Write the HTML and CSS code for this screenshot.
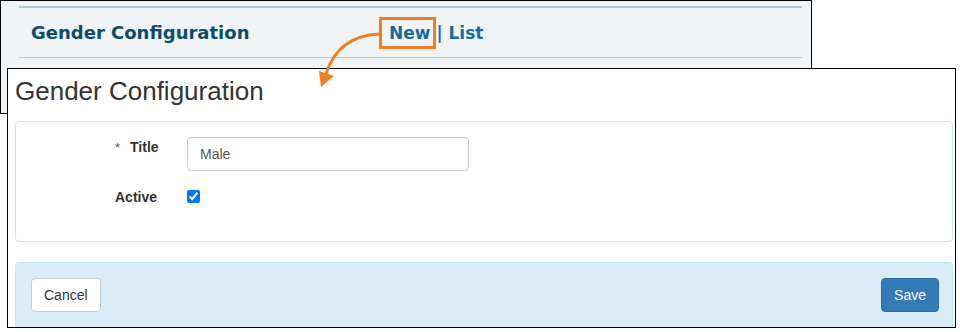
FILE: index.html
```html
<!DOCTYPE html>
<html lang="en">
<head>
    <meta charset="UTF-8">
    <meta name="viewport" content="width=device-width, initial-scale=1.0">
    <title>Gender Configuration</title>
    <link rel="stylesheet" href="styles.css">
</head>
<body>
    <div class="shot shot-list">
        <div class="list-head">
            <h2 class="list-title">Gender Configuration</h2>
            <nav class="list-links">
                <a class="link link-new" href="#">New</a> | <a class="link" href="#">List</a>
            </nav>
        </div>
    </div>

    <div class="shot shot-form">
        <h1 class="form-title">Gender Configuration</h1>

        <div class="form-body">
            <div class="form-row">
                <label class="form-label" for="title"><span class="required">*</span>Title</label>
                <input type="text" class="form-input" id="title" value="Male">
            </div>
            <div class="form-row">
                <label class="form-label" for="active">Active</label>
                <input type="checkbox" class="form-check" id="active" checked>
            </div>
        </div>

        <div class="form-footer">
            <button class="btn">Cancel</button>
            <button class="btn btn-primary">Save</button>
        </div>
    </div>

    <!-- annotation arrow from the New link down to the form -->
    <svg class="callout" width="960" height="332" viewBox="0 0 960 332">
        <path d="M379 34 Q338 36 326 74" fill="none" stroke="#f07f22" stroke-width="3"/>
        <polygon points="319,71 334,76 321,87" fill="#f07f22"/>
    </svg>
</body>
</html>
```

FILE: styles.css
```css
body {
    margin: 0;
    padding: 0;
    background: #fff;
    font-family: "Liberation Sans", Arial, sans-serif;
    color: #333;
    position: relative;
    width: 960px;
    height: 332px;
    overflow: hidden;
}

.shot {
    box-sizing: border-box;
    border: 1px solid #000;
}

/* list page screenshot */
.shot-list {
    width: 812px;
    height: 114px;
    background: #f0f4f7;
    padding: 5px 9px 0 18px;
}

.list-head {
    display: flex;
    align-items: center;
    height: 52px;
    box-sizing: border-box;
    border-top: 2px solid #b5c7d3;
    border-bottom: 1px solid #b9c8d3;
    padding-left: 12px;
}

.list-title {
    width: 358px;
    margin: 0;
    font-family: "DejaVu Sans", Verdana, sans-serif;
    font-size: 18px;
    font-weight: bold;
    color: #0f4b6d;
}

.list-links {
    font-family: "DejaVu Sans", Verdana, sans-serif;
    font-size: 17px;
    font-weight: bold;
    color: #1a6aa0;
}

.link {
    color: #1a6aa0;
    text-decoration: none;
}

.link-new {
    position: relative;
}

.link-new::after {
    content: "";
    position: absolute;
    left: -10px;
    right: -6px;
    top: -6px;
    bottom: -6px;
    border: 3px solid #f07f22;
}

/* new form screenshot */
.shot-form {
    position: relative;
    width: 949px;
    height: 260px;
    margin: -46px 0 0 7px;
    background: #fff;
    padding: 0 2px 0 7px;
    overflow: hidden;
}

.form-title {
    margin: 8px 0 0;
    font-size: 26px;
    line-height: 28px;
    font-weight: normal;
    color: #333;
}

.form-body {
    margin-top: 16px;
    height: 121px;
    box-sizing: border-box;
    border: 1px solid #bce8f1;
    border-radius: 4px;
    padding: 15px 0 0 99px;
    display: flex;
    flex-direction: column;
    gap: 16px;
}

.form-row {
    display: flex;
    align-items: flex-start;
}

.form-label {
    width: 72px;
    font-size: 14px;
    line-height: 20px;
    font-weight: bold;
    color: #333;
}

.required {
    font-weight: normal;
    font-size: 13px;
    color: #8a3b3b;
    margin-right: 10px;
}

.form-input {
    box-sizing: border-box;
    width: 282px;
    height: 34px;
    margin: 0;
    padding: 6px 12px;
    border: 1px solid #ccc;
    border-radius: 4px;
    font-family: "Liberation Sans", Arial, sans-serif;
    font-size: 14px;
    color: #555;
}

.form-check {
    width: 13px;
    height: 13px;
    margin: 3px 0 0;
    accent-color: #0075ff;
}

.form-footer {
    margin-top: 20px;
    height: 80px;
    box-sizing: border-box;
    background: #d9edf7;
    border: 1px solid #bce8f1;
    border-radius: 4px;
    padding: 15px 13px 0 15px;
    display: flex;
    justify-content: space-between;
    align-items: flex-start;
}

.btn {
    height: 34px;
    padding: 6px 12px;
    font-family: "Liberation Sans", Arial, sans-serif;
    font-size: 14px;
    line-height: 20px;
    color: #333;
    background: #fff;
    border: 1px solid #ccc;
    border-radius: 4px;
    cursor: pointer;
}

.btn-primary {
    color: #fff;
    background: #337ab7;
    border-color: #2e6da4;
}

.callout {
    position: absolute;
    left: 0;
    top: 0;
    pointer-events: none;
}
```
